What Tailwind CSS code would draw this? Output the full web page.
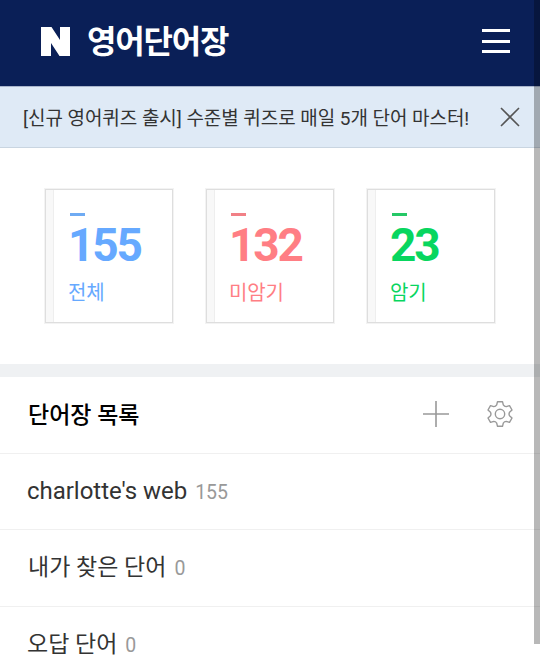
<!DOCTYPE html>
<html lang="ko">
<head>
  <meta charset="UTF-8" />
  <meta name="viewport" content="width=device-width, initial-scale=1.0" />
  <title>영어단어장</title>
  <script src="https://cdn.jsdelivr.net/npm/@tailwindcss/browser@4"></script>
</head>
<body class="h-[660px] overflow-hidden bg-white font-['Roboto','Noto_Sans_CJK_KR',sans-serif] text-[#333]">

  <!-- Header -->
  <header class="h-[86px] bg-[#0a1f57] flex items-center justify-between pl-[41px] pr-[30px] pb-1">
    <div class="flex items-center">
      <svg class="w-[29px] h-[29px]" viewBox="0 0 29 29" fill="#fff"><path d="M0 0h10.500l8.500 13V0h10v29H18.500L10 16v13H0z" /></svg>
      <h1 class="ml-[17px] pt-[2px] text-[32px] leading-10 font-bold text-white tracking-[-1.2px] whitespace-nowrap">영어단어장</h1>
    </div>
    <button class="flex flex-col gap-[7.5px]">
      <span class="block w-[28px] h-[3px] bg-white"></span>
      <span class="block w-[28px] h-[3px] bg-white"></span>
      <span class="block w-[28px] h-[3px] bg-white"></span>
    </button>
  </header>

  <!-- Notice -->
  <div class="h-[62px] bg-[#dfeaf6] border-t border-t-[#a9b5cc] border-b border-b-[#c9d5e1] flex items-center justify-between pl-[23px] pr-[20px]">
    <p class="pt-[3px] text-[19px] leading-7 tracking-[-0.05px] whitespace-nowrap">[신규 영어퀴즈 출시] 수준별 퀴즈로 매일 5개 단어 마스터!</p>
    <svg class="w-[20px] h-[20px]" viewBox="0 0 20 20" fill="none" stroke="#555" stroke-width="1.6"><path d="M1 1l18 18M19 1L1 19" /></svg>
  </div>

  <!-- Counters -->
  <section class="h-[216px] flex gap-[33px] pl-[45px] pt-[41px]">
    <div class="w-[128px] h-[134px] border border-[#dedede] outline outline-[#f3f3f3] flex text-[#66a9ff]">
      <div class="w-[8px] bg-[#f8f8f8] border-r border-[#eee]"></div>
      <div class="pl-[14px] pt-[23px]">
        <div class="ml-[2px] w-[15px] h-[3px] bg-[#6fabf3]"></div>
        <div class="text-[46px] leading-[58px] font-bold tracking-[-2.2px]">155</div>
        <div class="mt-[5px] text-[20px] leading-7 tracking-[-0.2px]">전체</div>
      </div>
    </div>
    <div class="w-[128px] h-[134px] border border-[#dedede] outline outline-[#f3f3f3] flex text-[#ff7e84]">
      <div class="w-[8px] bg-[#f8f8f8] border-r border-[#eee]"></div>
      <div class="pl-[14px] pt-[23px]">
        <div class="ml-[2px] w-[15px] h-[3px] bg-[#f18086]"></div>
        <div class="text-[46px] leading-[58px] font-bold tracking-[-2.2px]">132</div>
        <div class="mt-[5px] text-[20px] leading-7 tracking-[-0.2px]">미암기</div>
      </div>
    </div>
    <div class="w-[128px] h-[134px] border border-[#dedede] outline outline-[#f3f3f3] flex text-[#08d65f]">
      <div class="w-[8px] bg-[#f8f8f8] border-r border-[#eee]"></div>
      <div class="pl-[14px] pt-[23px]">
        <div class="ml-[2px] w-[15px] h-[3px] bg-[#25c866]"></div>
        <div class="text-[46px] leading-[58px] font-bold tracking-[-2.2px]">23</div>
        <div class="mt-[5px] text-[20px] leading-7 tracking-[-0.2px]">암기</div>
      </div>
    </div>
  </section>

  <div class="h-[13px] bg-[#eff1f3]"></div>

  <!-- Word lists -->
  <section>
    <div class="h-[77px] border-b border-[#f0f0f0] flex items-center justify-between pl-[28px] pr-[27px] pb-[2px]">
      <h2 class="pt-[3px] text-[23px] leading-8 font-medium text-black">단어장 목록</h2>
      <div class="flex items-center gap-[38px]">
        <svg class="w-[26px] h-[26px]" viewBox="0 0 26 26" fill="none" stroke="#999" stroke-width="1.6"><path d="M13 0v26M0 13h26" /></svg>
        <svg class="w-[26px] h-[26px]" viewBox="0 0 26 26" fill="none" stroke="#999" stroke-width="1.4" stroke-linejoin="round">
          <path d="M10.500 .7h5l.8 3.200q1.200 1.800 2.900 1.700l3.300-1L25 9l-2.500 2.300q-.9 1.700 0 3.400L25 17l-2.500 4.400-3.300-1q-1.700-.1-2.900 1.700l-.8 3.200h-5l-.8-3.200q-1.200-1.800-2.900-1.700l-3.300 1L1 17l2.500-2.300q.9-1.700 0-3.400L1 9l2.500-4.400 3.300 1q1.700.1 2.900-1.700z" />
          <circle cx="13" cy="13" r="4.7" />
        </svg>
      </div>
    </div>
    <ul>
      <li class="h-[76px] border-b border-[#f0f0f0] flex items-baseline pl-[27px] pt-[21px]">
        <span class="text-[24px] leading-8 tracking-[-0.03px]">charlotte's web</span><span class="ml-2 text-[19.5px] text-[#999]">155</span>
      </li>
      <li class="h-[77px] border-b border-[#f0f0f0] flex items-baseline pl-[28px] pt-[22px]">
        <span class="text-[23px] leading-8">내가 찾은 단어</span><span class="-mt-px ml-2 text-[19.5px] text-[#999]">0</span>
      </li>
      <li class="h-[76px] flex items-baseline pl-[27px] pt-[22px]">
        <span class="text-[23px] leading-8">오답 단어</span><span class="ml-2 text-[19.5px] text-[#999]">0</span>
      </li>
    </ul>
  </section>

  <!-- Scrollbar over the page -->
  <div class="absolute top-0 right-0 w-[6px] h-[644px] bg-black/28"></div>
</body>
</html>
